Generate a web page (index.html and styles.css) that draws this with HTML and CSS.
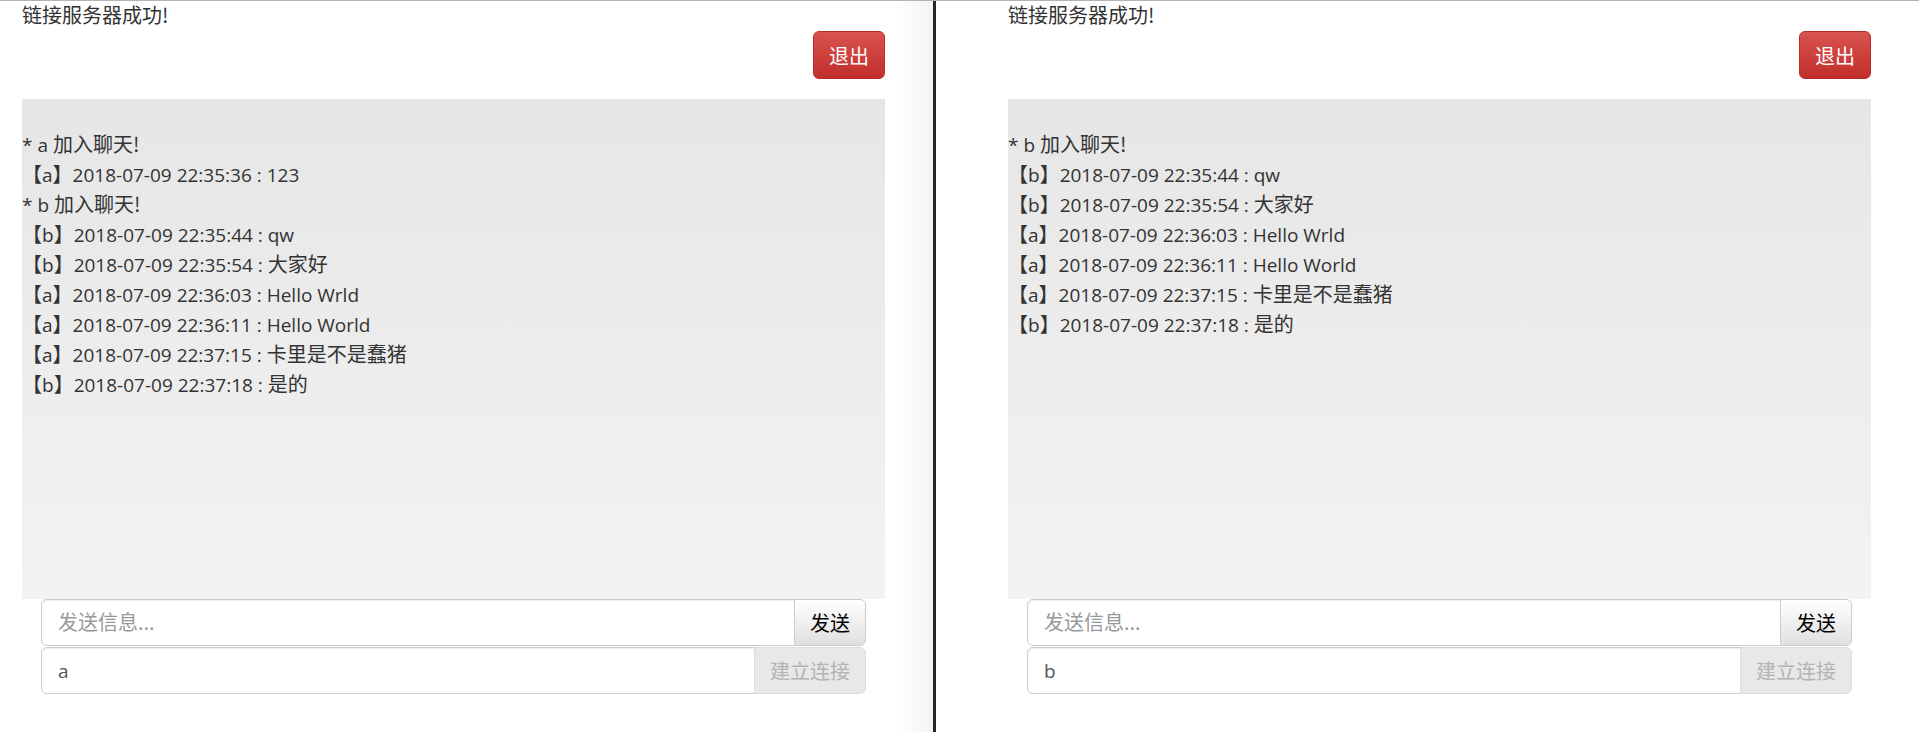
FILE: index.html
```html
<!DOCTYPE html>
<html lang="zh-CN">
<head>
<meta charset="utf-8">
<title>聊天</title>
<link rel="stylesheet" href="styles.css">
</head>
<body>
<div class="screen">
  <section class="pane pane-left">
    <div class="status">链接服务器成功!</div>
    <div class="toolbar"><button class="btn-exit">退出</button></div>
    <div class="chat">
      <div class="msg">* a <span class="zh">加入聊天!</span></div>
      <div class="msg"><span class="zh">【</span>a<span class="zh">】</span>2018-07-09 22:35:36 : 123</div>
      <div class="msg">* b <span class="zh">加入聊天!</span></div>
      <div class="msg"><span class="zh">【</span>b<span class="zh">】</span>2018-07-09 22:35:44 : qw</div>
      <div class="msg"><span class="zh">【</span>b<span class="zh">】</span>2018-07-09 22:35:54 : <span class="zh">大家好</span></div>
      <div class="msg"><span class="zh">【</span>a<span class="zh">】</span>2018-07-09 22:36:03 : Hello Wrld</div>
      <div class="msg"><span class="zh">【</span>a<span class="zh">】</span>2018-07-09 22:36:11 : Hello World</div>
      <div class="msg"><span class="zh">【</span>a<span class="zh">】</span>2018-07-09 22:37:15 : <span class="zh">卡里是不是蠢猪</span></div>
      <div class="msg"><span class="zh">【</span>b<span class="zh">】</span>2018-07-09 22:37:18 : <span class="zh">是的</span></div>
    </div>
    <div class="form">
      <div class="row">
        <input class="field" type="text" placeholder="发送信息...">
        <button class="btn-send">发送</button>
      </div>
      <div class="row">
        <input class="field" type="text" value="a">
        <button class="btn-connect" disabled>建立连接</button>
      </div>
    </div>
  </section>
  <div class="divider"></div>
  <section class="pane pane-right">
    <div class="status">链接服务器成功!</div>
    <div class="toolbar"><button class="btn-exit">退出</button></div>
    <div class="chat">
      <div class="msg">* b <span class="zh">加入聊天!</span></div>
      <div class="msg"><span class="zh">【</span>b<span class="zh">】</span>2018-07-09 22:35:44 : qw</div>
      <div class="msg"><span class="zh">【</span>b<span class="zh">】</span>2018-07-09 22:35:54 : <span class="zh">大家好</span></div>
      <div class="msg"><span class="zh">【</span>a<span class="zh">】</span>2018-07-09 22:36:03 : Hello Wrld</div>
      <div class="msg"><span class="zh">【</span>a<span class="zh">】</span>2018-07-09 22:36:11 : Hello World</div>
      <div class="msg"><span class="zh">【</span>a<span class="zh">】</span>2018-07-09 22:37:15 : <span class="zh">卡里是不是蠢猪</span></div>
      <div class="msg"><span class="zh">【</span>b<span class="zh">】</span>2018-07-09 22:37:18 : <span class="zh">是的</span></div>
    </div>
    <div class="form">
      <div class="row">
        <input class="field" type="text" placeholder="发送信息...">
        <button class="btn-send">发送</button>
      </div>
      <div class="row">
        <input class="field" type="text" value="b">
        <button class="btn-connect" disabled>建立连接</button>
      </div>
    </div>
  </section>
</div>
</body>
</html>
```
FILE: styles.css
```css
* { box-sizing: border-box; }
html, body { margin: 0; padding: 0; background: #fff; }
body {
  font-family: "Open Sans", "Noto Sans CJK SC", sans-serif;
  color: #333;
  font-size: 19px;
}
.screen {
  display: flex;
  height: 732px;
  border-top: 1px solid #b4b4b4;
  overflow: hidden;
}
.pane {
  display: flex;
  flex-direction: column;
  padding-right: 48px;
}
.pane-left {
  width: 933px;
  padding-left: 22px;
  background: linear-gradient(to right, #fff 0, #fff 895px, #f3f3f3 933px);
}
.pane-right {
  flex: 1;
  padding-left: 72px;
}
.divider {
  width: 3px;
  background: #262626;
}
.status {
  font-family: "Noto Sans CJK SC", sans-serif;
  font-size: 20px;
  line-height: 27px;
  color: #333;
}
.toolbar {
  display: flex;
  justify-content: flex-end;
  margin-top: 3px;
}
button {
  font-family: "Noto Sans CJK SC", sans-serif;
  font-size: 20px;
  cursor: pointer;
}
.btn-exit {
  height: 48px;
  padding: 0 15px;
  color: #fff;
  background: linear-gradient(to bottom, #d9534f 0, #c12e2a 100%);
  border: 1px solid #b92c28;
  border-radius: 6px;
}
.chat {
  margin-top: 20px;
  height: 500px;
  padding-top: 31px;
  background: linear-gradient(to bottom, #e6e6e6 0, #f3f3f3 100%);
  line-height: 30px;
  font-size: 19px;
  color: #333;
}
.msg { white-space: pre; height: 30px; }
.zh {
  font-family: "Noto Sans CJK SC", sans-serif;
  font-size: 20px;
  line-height: 20px;
}
.form {
  padding: 0 19px;
}
.row {
  display: flex;
  height: 47px;
}
.row + .row { margin-top: 1px; }
.field {
  flex: 1;
  min-width: 0;
  height: 47px;
  padding: 0 16px;
  font-family: "Open Sans", "Noto Sans CJK SC", sans-serif;
  font-size: 19px;
  color: #555;
  border: 1px solid #ccc;
  border-radius: 6px 0 0 6px;
  box-shadow: inset 0 1px 1px rgba(0,0,0,.075);
  outline: none;
  background: #fff;
}
.field::placeholder {
  font-family: "Noto Sans CJK SC", sans-serif;
  font-size: 20px;
  color: #999;
}
.btn-send {
  width: 72px;
  margin-left: -1px;
  color: #000;
  background: linear-gradient(to bottom, #fff 0, #e0e0e0 100%);
  border: 1px solid #ccc;
  border-radius: 0 6px 6px 0;
}
.btn-connect {
  width: 112px;
  margin-left: -1px;
  color: #b3b3b3;
  background: #e8e8e8;
  border: 1px solid #ddd;
  border-radius: 0 6px 6px 0;
  cursor: not-allowed;
}
```
